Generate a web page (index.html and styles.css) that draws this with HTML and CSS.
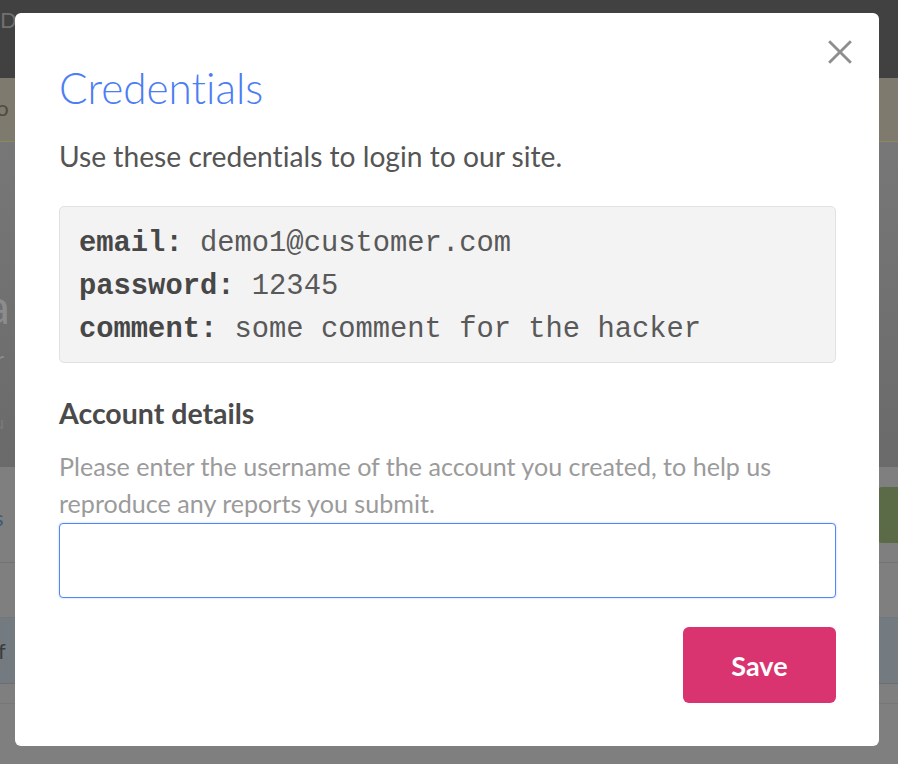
FILE: index.html
```html
<!DOCTYPE html>
<html lang="en">
<head>
<meta charset="utf-8">
<title>Credentials</title>
<link rel="stylesheet" href="styles.css">
</head>
<body>
<div class="page">
  <div class="topbar"><span class="topbar-text">D</span></div>
  <div class="notice"><span class="notice-text">lo</span></div>
  <div class="hero">
    <span class="hero-title">a</span>
    <span class="hero-sub">r</span>
    <span class="hero-meta">u</span>
  </div>
  <div class="tabs">
    <span class="tab-link">s</span>
    <span class="tab-btn"></span>
  </div>
  <div class="spacer"></div>
  <div class="row-blue"><span class="row-text">f</span></div>
  <div class="row-plain"></div>
</div>

<div class="modal" role="dialog" aria-labelledby="modal-title">
  <button class="close" type="button" aria-label="Close">
    <svg viewBox="0 0 24 24" width="26" height="26"><path d="M2 2 L22 22 M22 2 L2 22" stroke="#8e8e8e" stroke-width="2.6" stroke-linecap="butt" fill="none"/></svg>
  </button>
  <h1 class="title" id="modal-title">Credentials</h1>
  <p class="lead">Use these credentials to login to our site.</p>
  <pre class="creds"><b>email:</b> demo1@customer.com
<b>password:</b> 12345
<b>comment:</b> some comment for the hacker</pre>
  <h2 class="label">Account details</h2>
  <p class="help">Please enter the username of the account you created, to help us reproduce any reports you submit.</p>
  <input class="field" type="text" aria-label="Username">
  <div class="actions">
    <button class="save" type="button">Save</button>
  </div>
</div>
</body>
</html>
```

FILE: styles.css
```css
html, body {
  margin: 0;
  padding: 0;
}
body {
  width: 898px;
  height: 764px;
  overflow: hidden;
  background: #7f7f7f;
  font-family: Lato, "Noto Sans", sans-serif;
  font-variant-ligatures: none;
  position: relative;
}

/* dimmed background page */
.page {
  display: flex;
  flex-direction: column;
}
.topbar {
  height: 78px;
  background: #414141;
  color: #707070;
  font-size: 22px;
  line-height: 40px;
}
.topbar-text {
  display: block;
  margin-left: 0;
}
.notice {
  height: 63px;
  background: #7e7a6d;
  border-bottom: 1px solid #8b8760;
  color: #4e4b40;
  font-size: 22px;
  line-height: 60px;
}
.notice-text {
  display: block;
  margin-left: -9px;
}
.hero {
  height: 325px;
  background: linear-gradient(#777777, #6a6a6a);
  display: flex;
  flex-direction: column;
  color: #8c8c8c;
}
.hero-title {
  font-size: 48px;
  line-height: 48px;
  margin-top: 140px;
  margin-left: -14px;
}
.hero-sub {
  font-size: 22px;
  line-height: 30px;
  margin-top: 14px;
  margin-left: -4px;
}
.hero-meta {
  font-size: 18px;
  line-height: 24px;
  margin-top: 36px;
  margin-left: -6px;
  color: #7a7a7a;
}
.tabs {
  height: 95px;
  border-bottom: 1px solid #737373;
  display: flex;
  justify-content: space-between;
  align-items: flex-start;
}
.tab-link {
  color: #3f5a78;
  font-size: 22px;
  line-height: 30px;
  margin-top: 36px;
  margin-left: -6px;
}
.tab-btn {
  width: 40px;
  height: 56px;
  margin-top: 20px;
  margin-right: -20px;
  background: #5b6b48;
  border-radius: 4px;
}
.spacer {
  height: 54px;
}
.row-blue {
  height: 65px;
  background: #737a80;
  border-top: 1px solid #6f777f;
  border-bottom: 1px solid #6b6f74;
  color: #3c3c3c;
  font-size: 22px;
  line-height: 65px;
}
.row-text {
  display: block;
  margin-left: -2px;
}
.row-plain {
  height: 19px;
  border-bottom: 1px solid #777;
}

/* modal */
.modal {
  position: absolute;
  left: 15px;
  top: 13px;
  width: 864px;
  height: 733px;
  box-sizing: border-box;
  padding: 0 43px 0 44px;
  background: #ffffff;
  border-radius: 6px;
  display: flex;
  flex-direction: column;
}
.close {
  position: absolute;
  top: 26px;
  right: 26px;
  width: 26px;
  height: 26px;
  padding: 0;
  border: 0;
  background: transparent;
  cursor: pointer;
}
.close svg {
  display: block;
}
.title {
  margin: 51px 0 0;
  font-size: 42.3px;
  font-weight: 300;
  line-height: 48px;
  color: #4b7df3;
}
.lead {
  margin: 27px 0 0;
  font-size: 28.2px;
  line-height: 34px;
  color: #555555;
}
.creds {
  margin: 33px 0 0;
  padding: 15px 19px 11px;
  background: #f3f3f3;
  border: 1px solid #e1e1e1;
  border-radius: 5px;
  font-family: "Liberation Mono", "DejaVu Sans Mono", monospace;
  font-size: 28.8px;
  line-height: 43px;
  color: #595959;
  white-space: pre;
}
.creds b {
  color: #474747;
  font-weight: bold;
}
.label {
  margin: 33px 0 0;
  font-size: 28.5px;
  font-weight: bold;
  line-height: 34px;
  color: #4a4a4a;
}
.help {
  margin: 18px 0 0;
  font-size: 25.1px;
  line-height: 37px;
  color: #9b9b9b;
}
.field {
  margin: 1px 0 0;
  height: 75px;
  flex-shrink: 0;
  box-sizing: border-box;
  border: 1.5px solid #4f87f5;
  box-shadow: 0 0 2px rgba(77, 132, 245, 0.45);
  border-radius: 4px;
  outline: none;
  background: #fff;
  font-family: inherit;
  font-size: 24px;
}
.actions {
  display: flex;
  justify-content: flex-end;
  margin-top: 29px;
}
.save {
  width: 153px;
  height: 76px;
  border: 0;
  border-radius: 6px;
  background: #d93470;
  color: #ffffff;
  font-family: inherit;
  font-size: 27px;
  font-weight: bold;
  cursor: pointer;
}
```
